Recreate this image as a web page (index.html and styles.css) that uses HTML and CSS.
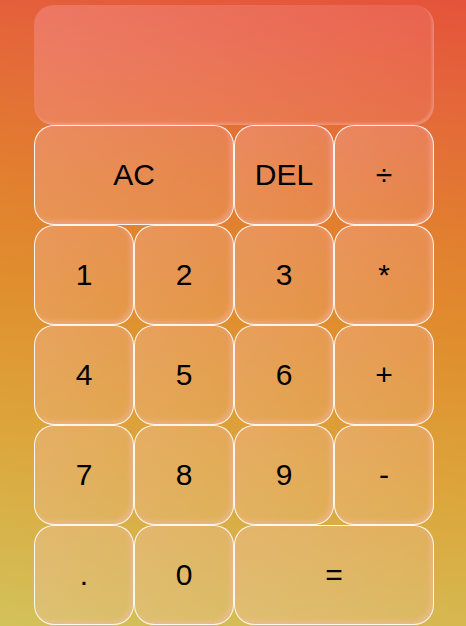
FILE: index.html
```html
<!DOCTYPE html>
<html>
<head>
<meta charset="utf-8">
<link rel="stylesheet" href="styles.css">
</head>
<body>
<div class="calc">
  <div class="display"></div>
  <div class="keys">
    <button class="key wide">AC</button>
    <button class="key">DEL</button>
    <button class="key">÷</button>
    <button class="key">1</button>
    <button class="key">2</button>
    <button class="key">3</button>
    <button class="key">*</button>
    <button class="key">4</button>
    <button class="key">5</button>
    <button class="key">6</button>
    <button class="key">+</button>
    <button class="key">7</button>
    <button class="key">8</button>
    <button class="key">9</button>
    <button class="key">-</button>
    <button class="key">.</button>
    <button class="key">0</button>
    <button class="key wide">=</button>
  </div>
</div>
</body>
</html>
```
FILE: styles.css
```css
html, body {
  margin: 0;
  height: 100%;
}
body {
  background: linear-gradient(188deg, #e5533a 0%, #e4673a 15%, #e27c30 32%, #e08e2e 50%, #dca63c 72%, #d3c15a 100%);
  display: flex;
  justify-content: center;
  padding: 5px 0 0 2px;
  box-sizing: border-box;
  font-family: "Liberation Sans", Arial, sans-serif;
}
.calc {
  width: 400px;
  display: flex;
  flex-direction: column;
}
.display {
  height: 120px;
  border-radius: 20px;
  background: linear-gradient(135deg, rgba(255,170,190,0.32), rgba(255,150,160,0.14));
  box-shadow: inset -2px -2px 3px rgba(255,200,200,0.35);
}
.keys {
  display: grid;
  grid-template-columns: repeat(4, 100px);
  grid-auto-rows: 100px;
}
.key {
  margin: 0;
  padding: 0;
  border: 1px solid rgba(255,255,255,0.9);
  border-radius: 20px;
  background: linear-gradient(135deg, rgba(255,200,210,0.28), rgba(255,200,210,0.14));
  box-shadow: inset -3px -3px 4px rgba(255,190,200,0.35);
  font-family: "Liberation Sans", Arial, sans-serif;
  font-size: 30px;
  color: #000;
  display: flex;
  align-items: center;
  justify-content: center;
}
.wide {
  grid-column: span 2;
}
```
